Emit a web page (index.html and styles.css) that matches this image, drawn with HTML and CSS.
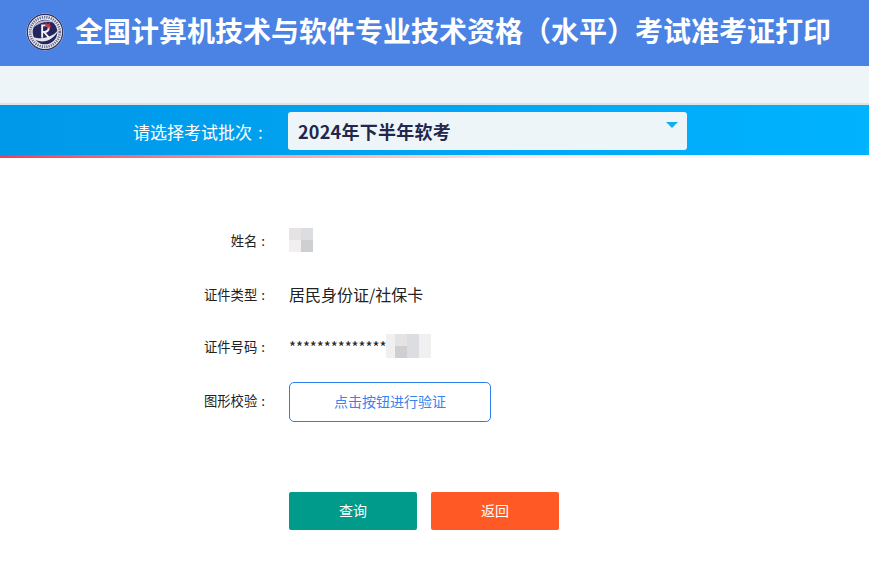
FILE: index.html
```html
<!DOCTYPE html>
<html lang="zh-CN">
<head>
<meta charset="utf-8">
<title>准考证打印</title>
<link rel="stylesheet" href="styles.css">
</head>
<body>
<header class="top">
  <svg class="logo" width="38" height="38" viewBox="0 0 40 40" aria-hidden="true">
    <circle cx="20" cy="20" r="19.5" fill="#eef0f5"/>
    <circle cx="20" cy="20" r="18.6" fill="none" stroke="#2b2c5c" stroke-width="1.2"/>
    <circle cx="20" cy="20" r="15.6" fill="none" stroke="#6f7190" stroke-width="3" stroke-dasharray="1.4 1"/>
    <circle cx="20" cy="20" r="13" fill="#23255c"/>
    <path d="M6 25C12 33 29 32 35 16C30 25 17 29 6 25Z" fill="#e4e6ee"/>
    <path d="M8 15C11 7 25 5 32 11C24 8 15 10 8 15Z" fill="#b5b7cc"/>
    <path d="M16 13H21C25 13 25 19 20 20H17M17 12V26M19 20L25 27" fill="none" stroke="#f3f3f7" stroke-width="2"/>
    <path d="M21 10l2 2 2.500-2-.500 3 2 1.500-3 .500-1 2.500-1-3-2-1z" fill="#d8323c"/>
  </svg>
  <h1 class="title">全国计算机技术与软件专业技术资格（水平）考试准考证打印</h1>
</header>
<div class="subbar"></div>
<section class="batch">
  <label class="batch-label">请选择考试批次<span class="batch-colon">:</span></label>
  <div class="select">
    <span class="select-value">2024年下半年软考</span>
    <span class="select-arrow"></span>
  </div>
</section>
<div class="accent"></div>
<main class="form">
  <div class="row">
    <span class="label">姓名<i class="colon">:</i></span>
    <div class="mosaic mosaic-name">
      <b class="m1"></b><b class="m2"></b><b class="m0"></b><b class="m3"></b>
    </div>
  </div>
  <div class="row row-type">
    <span class="label">证件类型<i class="colon">:</i></span>
    <span class="value">居民身份证/社保卡</span>
  </div>
  <div class="row">
    <span class="label">证件号码<i class="colon">:</i></span>
    <span class="value stars">**************</span>
    <div class="mosaic mosaic-id">
      <b class="m4"></b><b class="m1"></b><b class="m2"></b><b class="m4"></b>
      <b class="m4"></b><b class="m3"></b><b class="m2"></b><b class="m4"></b>
    </div>
  </div>
  <div class="row row-verify">
    <span class="label">图形校验<i class="colon">:</i></span>
    <button class="verify" type="button">点击按钮进行验证</button>
  </div>
  <div class="actions">
    <button class="btn btn-query" type="button">查询</button>
    <button class="btn btn-back" type="button">返回</button>
  </div>
</main>
</body>
</html>
```
FILE: styles.css
```css
* { box-sizing: border-box; }
html, body { margin: 0; padding: 0; }
body {
  background: #fff;
  color: #222;
  font-family: "Noto Sans CJK SC", "Liberation Sans", sans-serif;
  overflow: hidden;
}
.top {
  height: 66px;
  background: #4a83e4;
  display: flex;
  align-items: center;
  padding-left: 26px;
  padding-bottom: 2px;
  gap: 11px;
}
.logo { flex: none; }
.title {
  margin: 0 0 4px;
  font-size: 28px;
  line-height: 1;
  font-weight: 700;
  color: #fff;
  white-space: nowrap;
}
.subbar {
  height: 39px;
  background: #eef5f8;
  border-bottom: 2px solid #dfe3e6;
}
.batch {
  height: 50px;
  background: linear-gradient(90deg, #0098e8 0%, #00b3ff 100%);
  display: flex;
  align-items: center;
  padding-left: 133px;
}
.batch-label {
  width: 155px;
  margin-top: 3px;
  font-size: 17px;
  color: #fff;
  line-height: 1;
}
.batch-colon { margin-left: 6px; }
.select {
  width: 399px;
  height: 38px;
  margin-top: 2px;
  background: #eef5f8;
  border-radius: 3px;
  display: flex;
  align-items: center;
  justify-content: space-between;
  padding: 0 9px 0 10px;
}
.select-value {
  font-size: 18px;
  font-weight: 700;
  color: #23264d;
  line-height: 1;
  letter-spacing: 0.25px;
}
.select-arrow {
  width: 0;
  height: 0;
  border-left: 6px solid transparent;
  border-right: 6px solid transparent;
  border-top: 6px solid #13aef0;
  margin-bottom: 13px;
}
.accent {
  height: 3px;
  background: linear-gradient(90deg, #ee4055 0%, #f59aa5 30%, #fde6e9 60%, #ffffff 90%);
}
.form {
  padding-top: 67px;
  display: flex;
  flex-direction: column;
}
.row {
  display: flex;
  align-items: center;
  height: 30px;
  margin-bottom: 24px;
}
.row-type { margin-bottom: 22px; }
.label {
  width: 265px;
  padding-top: 2px;
  text-align: right;
  font-size: 13.33px;
  color: #222;
  line-height: 1;
  flex: none;
}
.colon { font-style: normal; margin-left: 4px; }
.value {
  margin-left: 24px;
  font-size: 16px;
  line-height: 1;
  color: #222;
}
.stars { margin-left: 24px; font-size: 15px; letter-spacing: -0.05px; }
.mosaic { display: grid; }
.mosaic b { display: block; }
.mosaic-name {
  margin-left: 24px;
  width: 24px;
  height: 24px;
  grid-template-columns: 12px 12px;
  grid-template-rows: 12px 12px;
}
.mosaic-id {
  width: 45px;
  height: 24px;
  grid-template-columns: 9px 12px 12px 12px;
  grid-template-rows: 12px 12px;
}
.m0 { background: #f1eff0; }
.m1 { background: #e6e3e4; }
.m2 { background: #dcdde0; }
.m3 { background: #cdcfd1; }
.m4 { background: #f0f0f1; }
.row-verify { height: 40px; margin-top: -3px; margin-bottom: 70px; }
.row-verify .label { padding: 0 0 2px; }
.verify {
  margin-left: 24px;
  width: 202px;
  height: 40px;
  background: #fff;
  border: 1px solid #2b7fee;
  border-radius: 5px;
  color: #3a82ee;
  font-family: inherit;
  font-size: 14px;
  line-height: 1;
  padding: 0 0 2px;
}
.actions {
  display: flex;
  gap: 14px;
  padding-left: 289px;
}
.btn {
  width: 128px;
  height: 38px;
  border: 0;
  border-radius: 2px;
  color: #fff;
  font-family: inherit;
  font-size: 14px;
  line-height: 1;
  padding: 0 0 2px;
}
.btn-query { background: #009b8a; }
.btn-back { background: #ff5a25; }
```
